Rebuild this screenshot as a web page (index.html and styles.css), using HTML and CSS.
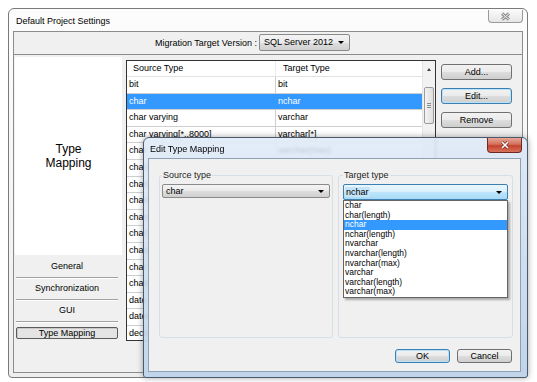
FILE: index.html
```html
<!DOCTYPE html>
<html lang="en">
<head>
	<meta charset="UTF-8">
	<title>Default Project Settings</title>
	<link rel="stylesheet" href="styles.css">
</head>
<body>
	<div class="window">
		<div class="title-bar">
			<span class="title">Default Project Settings</span>
			<button class="close-btn">
				<svg width="11" height="9" viewBox="0 0 11 9">
					<path d="M2 1.5 L9 7.5 M9 1.5 L2 7.5" stroke="#8c8c8c" stroke-width="3"/>
					<path d="M2 1.5 L9 7.5 M9 1.5 L2 7.5" stroke="#f6f6f6" stroke-width="1"/>
				</svg>
			</button>
		</div>
		<div class="client">
			<div class="toolbar">
				<span>Migration Target Version :</span>
				<div class="combo version">
					<span>SQL Server 2012</span>
					<span class="arrow"></span>
				</div>
			</div>
			<div class="content">
				<div class="side">
					<div class="side-head">Type<br>Mapping</div>
					<div class="nav-item first">General</div>
					<div class="nav-item">Synchronization</div>
					<div class="nav-item">GUI</div>
					<div class="nav-item active">Type Mapping</div>
				</div>
				<div class="grid">
					<div class="grid-body">
						<div class="grid-row head">
							<div class="cell">Source Type</div>
							<div class="cell">Target Type</div>
						</div>
						<div class="grid-row"><div class="cell">bit</div><div class="cell">bit</div></div>
						<div class="grid-row selected"><div class="cell">char</div><div class="cell">nchar</div></div>
						<div class="grid-row"><div class="cell">char varying</div><div class="cell">varchar</div></div>
						<div class="grid-row"><div class="cell">char varying[*..8000]</div><div class="cell">varchar[*]</div></div>
						<div class="grid-row"><div class="cell">char</div><div class="cell">varchar(max)</div></div>
						<div class="grid-row"><div class="cell">char(n)</div><div class="cell">char</div></div>
						<div class="grid-row"><div class="cell">char[*]</div><div class="cell">varchar</div></div>
						<div class="grid-row"><div class="cell">character varying[*..8000]</div><div class="cell">varchar[*]</div></div>
						<div class="grid-row"><div class="cell">character[*..8000]</div><div class="cell">char[*]</div></div>
						<div class="grid-row"><div class="cell">char[*..8000]</div><div class="cell">char[*]</div></div>
						<div class="grid-row"><div class="cell">character large object</div><div class="cell">varchar(max)</div></div>
						<div class="grid-row"><div class="cell">char large object</div><div class="cell">varchar(max)</div></div>
						<div class="grid-row"><div class="cell">char(max)</div><div class="cell">char(max)</div></div>
						<div class="grid-row"><div class="cell">date</div><div class="cell">date</div></div>
						<div class="grid-row"><div class="cell">datetime</div><div class="cell">datetime</div></div>
						<div class="grid-row"><div class="cell">decimal</div><div class="cell">decimal</div></div>
					</div>
					<div class="scrollbar">
						<div class="scroll-up"><span class="arrow-up"></span></div>
						<div class="thumb"><span class="grip"></span></div>
					</div>
				</div>
				<div class="actions">
					<button class="btn">Add...</button>
					<button class="btn focused">Edit...</button>
					<button class="btn">Remove</button>
				</div>
			</div>
		</div>
	</div>

	<div class="dialog">
		<div class="dialog-title">
			<span>Edit Type Mapping</span>
			<button class="dialog-close">
				<svg width="10" height="8" viewBox="0 0 10 8">
					<path d="M2 1 L8 7 M8 1 L2 7" stroke="#7a2a22" stroke-width="3"/>
					<path d="M2 1 L8 7 M8 1 L2 7" stroke="#fff" stroke-width="1.6"/>
				</svg>
			</button>
		</div>
		<div class="dialog-client">
			<div class="groups">
				<fieldset class="group source">
					<legend>Source type</legend>
					<div class="combo">
						<span>char</span>
						<span class="arrow"></span>
					</div>
				</fieldset>
				<fieldset class="group target">
					<legend>Target type</legend>
					<div class="combo open">
						<span class="picked">nchar</span>
						<span class="arrow"></span>
					</div>
					<ul class="drop-list">
						<li>char</li>
						<li>char(length)</li>
						<li class="selected">nchar</li>
						<li>nchar(length)</li>
						<li>nvarchar</li>
						<li>nvarchar(length)</li>
						<li>nvarchar(max)</li>
						<li>varchar</li>
						<li>varchar(length)</li>
						<li>varchar(max)</li>
					</ul>
				</fieldset>
			</div>
			<div class="dialog-buttons">
				<button class="btn wide focused">OK</button>
				<button class="btn wide">Cancel</button>
			</div>
		</div>
	</div>
</body>
</html>
```

FILE: styles.css
```css
body {
	margin: 0;
	height: 382px;
	overflow: hidden;
	position: relative;
	background: #fff;
	font-family: "Liberation Sans", Arial, sans-serif;
	font-size: 9px;
	color: #000;
}

button {
	font-family: inherit;
	font-size: 9px;
	color: #000;
	padding: 0;
}

.window {
	margin: 8px 0 0 8px;
	width: 520px;
	height: 370px;
	box-sizing: border-box;
	border: 1px solid #7a7a7a;
	border-radius: 6px 6px 4px 4px;
	background: linear-gradient(180deg, #fcfcfc, #eceef0);
	padding: 0 4px 4px;
	display: flex;
	flex-direction: column;
}

.title-bar {
	height: 22px;
	display: flex;
	align-items: flex-start;
}

.title {
	margin: 7px 0 0 3px;
	line-height: 10px;
}

.close-btn {
	margin: 1px 0 0 auto;
	width: 35px;
	height: 13px;
	border: 1px solid #9a9a9a;
	border-top: none;
	border-radius: 0 0 4px 4px;
	background: linear-gradient(180deg, #fafafa, #e6e6e6);
	display: flex;
	align-items: center;
	justify-content: center;
}

.client {
	flex: 1;
	border: 1px solid #8c8c8c;
	background: #f0f0f0;
	display: flex;
	flex-direction: column;
}

.toolbar {
	height: 22px;
	border-bottom: 1px solid #8c8c8c;
	display: flex;
	align-items: center;
	padding-left: 141px;
	gap: 2px;
}

.combo {
	box-sizing: border-box;
	height: 15px;
	border: 1px solid #8a8a8a;
	border-radius: 2px;
	background: linear-gradient(180deg, #f4f4f4 0%, #ebebeb 50%, #dddddd 51%, #d0d0d0 100%);
	display: flex;
	align-items: center;
	justify-content: space-between;
	padding: 0 5px 0 3px;
}

.combo.version {
	width: 91px;
	height: 17px;
	margin-top: -2px;
	padding-left: 4px;
}

.arrow {
	width: 0;
	height: 0;
	border-left: 3px solid transparent;
	border-right: 3px solid transparent;
	border-top: 3px solid #000;
}

.content {
	flex: 1;
	display: flex;
	min-height: 0;
}

.side {
	width: 111px;
	box-sizing: border-box;
	padding: 2px 0 0 1px;
	display: flex;
	flex-direction: column;
}

.side-head {
	width: 107px;
	height: 198px;
	background: #fff;
	font-size: 12px;
	line-height: 14px;
	text-align: center;
	display: flex;
	align-items: center;
	justify-content: center;
}

.nav-item {
	width: 102px;
	margin-left: 1px;
	height: 21px;
	line-height: 21px;
	text-align: center;
	border-bottom: 1px solid #a0a0a0;
	box-shadow: 0 1px 0 #fff;
}

.nav-item.first {
	margin-top: 1px;
}

.nav-item.active {
	margin-top: 5px;
	height: 12px;
	box-sizing: border-box;
	line-height: 10px;
	border: 1px solid #5a5a5a;
	border-radius: 2px;
	background: #e4e4e4;
	box-shadow: inset 1px 1px 0 #c8c8c8;
}

.grid {
	margin: 5px 0 0 1px;
	width: 310px;
	height: 281px;
	box-sizing: border-box;
	border: 1px solid #333;
	background: #fff;
	display: flex;
	overflow: hidden;
}

.grid-body {
	width: 296px;
}

.grid-row {
	display: flex;
	height: 16.6px;
	box-sizing: border-box;
	border-bottom: 1px solid #cfcfcf;
}

.grid-row .cell {
	line-height: 15.6px;
	padding-left: 2px;
	white-space: nowrap;
	overflow: hidden;
}

.grid-row .cell:first-child {
	width: 146px;
	border-right: 1px solid #cfcfcf;
}

.grid-row .cell:last-child {
	flex: 1;
}

.grid-row.head {
	height: 16px;
	border-bottom: 1px solid #e2e2e2;
}

.grid-row.head .cell {
	line-height: 15px;
}

.grid-row.head .cell:first-child {
	padding-left: 6px;
	width: 142px;
	border-right-color: #ececec;
}

.grid-row.head .cell:last-child {
	padding-left: 7px;
}

.grid-row.selected {
	background: #3399ff;
	color: #fff;
}

.grid-row.selected .cell:first-child {
	border-right-color: #3399ff;
}

.scrollbar {
	width: 12px;
	background: #f2f2f2;
	border-left: 1px solid #e4e4e4;
}

.scroll-up {
	height: 16px;
	display: flex;
	align-items: center;
	justify-content: center;
}

.arrow-up {
	width: 0;
	height: 0;
	border-left: 2px solid transparent;
	border-right: 2px solid transparent;
	border-bottom: 3px solid #444;
}

.thumb {
	margin: 10px 0 0 1px;
	width: 10px;
	height: 37px;
	box-sizing: border-box;
	border: 1px solid #9b9b9b;
	border-radius: 2px;
	background: linear-gradient(90deg, #f4f4f4, #dedede);
	display: flex;
	align-items: center;
	justify-content: center;
}

.grip {
	width: 4px;
	height: 5px;
	background: repeating-linear-gradient(180deg, #8a8a8a 0 1px, transparent 1px 2px);
}

.actions {
	margin-left: 5px;
	padding-top: 9px;
	display: flex;
	flex-direction: column;
	gap: 8px;
}

.btn {
	width: 71px;
	height: 16px;
	box-sizing: border-box;
	border: 1px solid #707070;
	border-radius: 3px;
	background: linear-gradient(180deg, #f2f2f2 0%, #ebebeb 50%, #dddddd 51%, #cfcfcf 100%);
}

.btn.focused {
	border-color: #3c7fb1;
	box-shadow: inset 0 0 0 1px #b9e2fa;
}

/* dialog floats over the settings window */
.dialog {
	position: absolute;
	left: 143px;
	top: 137px;
	width: 385px;
	height: 241px;
	box-sizing: border-box;
	border: 1px solid #4a5a6c;
	border-radius: 6px 6px 3px 3px;
	background: linear-gradient(180deg, rgba(222, 234, 247, 0.86), rgba(190, 211, 234, 0.9));
	backdrop-filter: blur(1.5px);
	box-shadow: 0 0 6px rgba(0, 0, 0, 0.35);
	padding: 0 6px 5px 4px;
	display: flex;
	flex-direction: column;
}

.dialog-title {
	height: 20px;
	display: flex;
	align-items: flex-start;
}

.dialog-title span {
	margin: 6px 0 0 2px;
	line-height: 10px;
	font-size: 9px;
}

.dialog-close {
	margin: 0 -1px 0 auto;
	width: 35px;
	height: 15px;
	border: 1px solid #6d2a22;
	border-top: none;
	border-radius: 0 0 4px 4px;
	background: linear-gradient(180deg, #e8a493 0%, #d2715d 45%, #c5412c 55%, #d7735e 100%);
	display: flex;
	align-items: center;
	justify-content: center;
}

.dialog-client {
	flex: 1;
	border: 1px solid #8ea2b6;
	background: #f0f0f0;
	padding: 11px 0 0 10px;
	display: flex;
	flex-direction: column;
}

.groups {
	display: flex;
	gap: 5px;
}

.group {
	margin: 0;
	height: 168px;
	box-sizing: border-box;
	border: 1px solid #d5dfe5;
	border-radius: 3px;
	padding: 0 2px;
	position: relative;
}

.group.source {
	width: 174px;
}

.group.target {
	width: 175px;
	padding: 0 4px;
}

.group legend {
	padding: 0 1px;
	line-height: 10px;
	color: #1e1e1e;
}

.group .combo {
	margin-top: 4px;
	height: 14px;
}

.group .combo.open {
	height: 16px;
	border-color: #3c7fb1;
	background: linear-gradient(180deg, #eaf6fd 0%, #d9f0fc 50%, #bee6fd 51%, #a7d9f5 100%);
	padding-left: 1px;
}

.picked {
	background: #c6e4f8;
	padding: 0 1px;
}

.drop-list {
	position: absolute;
	left: 4px;
	top: 20px;
	width: 165px;
	height: 98px;
	box-sizing: border-box;
	margin: 0;
	padding: 0;
	list-style: none;
	background: #fff;
	border: 1px solid #646464;
	box-shadow: 2px 2px 2px rgba(0, 0, 0, 0.3);
	font-size: 8.5px;
}

.drop-list li {
	height: 9.6px;
	line-height: 9.6px;
	padding-left: 1px;
}

.drop-list li.selected {
	background: #3399ff;
	color: #fff;
}

.dialog-buttons {
	margin-top: 11px;
	padding-right: 8px;
	display: flex;
	justify-content: flex-end;
	gap: 7px;
}

.btn.wide {
	width: 55px;
	height: 14px;
}
```
